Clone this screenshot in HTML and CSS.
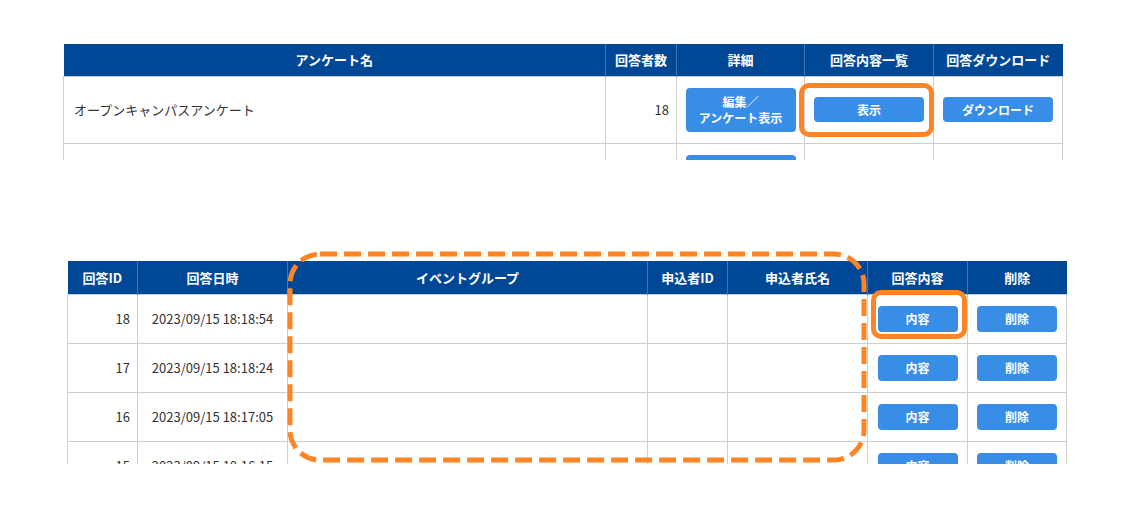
FILE: index.html
```html
<!DOCTYPE html>
<html lang="ja">
  <head>
    <meta charset="UTF-8" />
    <meta name="viewport" content="width=device-width, initial-scale=1.0" />
    <title>アンケート回答</title>
    <link rel="stylesheet" href="styles.css">
  </head>

  <body>
    <div class="page">

      <div class="shot shot-top">
        <table class="grid list">
          <colgroup>
            <col style="width:542px" />
            <col style="width:71px" />
            <col style="width:128px" />
            <col style="width:129px" />
            <col style="width:129px" />
          </colgroup>
          <tr>
            <th>アンケート名</th>
            <th>回答者数</th>
            <th>詳細</th>
            <th>回答内容一覧</th>
            <th>回答ダウンロード</th>
          </tr>
          <tr>
            <td class="name">オープンキャンパスアンケート</td>
            <td class="num">18</td>
            <td class="center"><button class="btn btn-wide btn-tall">編集／<br />アンケート表示</button></td>
            <td class="center"><button class="btn btn-wide mark mark-show">表示</button></td>
            <td class="center"><button class="btn btn-wide">ダウンロード</button></td>
          </tr>
          <tr>
            <td class="name">学校説明会アンケート</td>
            <td class="num">7</td>
            <td class="center"><button class="btn btn-wide btn-tall">編集／<br />アンケート表示</button></td>
            <td class="center"><button class="btn btn-wide">表示</button></td>
            <td class="center"><button class="btn btn-wide">ダウンロード</button></td>
          </tr>
        </table>
      </div>

      <div class="shot-wrap">
        <div class="shot shot-bottom">
          <table class="grid answers">
            <colgroup>
              <col style="width:70px" />
              <col style="width:150px" />
              <col style="width:360px" />
              <col style="width:80px" />
              <col style="width:140px" />
              <col style="width:100px" />
              <col style="width:99px" />
            </colgroup>
            <tr>
              <th>回答ID</th>
              <th>回答日時</th>
              <th>イベントグループ</th>
              <th>申込者ID</th>
              <th>申込者氏名</th>
              <th>回答内容</th>
              <th>削除</th>
            </tr>
            <tr>
              <td class="num">18</td>
              <td class="center">2023/09/15 18:18:54</td>
              <td></td><td></td><td></td>
              <td class="center"><button class="btn btn-small mark mark-detail">内容</button></td>
              <td class="center"><button class="btn btn-small">削除</button></td>
            </tr>
            <tr>
              <td class="num">17</td>
              <td class="center">2023/09/15 18:18:24</td>
              <td></td><td></td><td></td>
              <td class="center"><button class="btn btn-small">内容</button></td>
              <td class="center"><button class="btn btn-small">削除</button></td>
            </tr>
            <tr>
              <td class="num">16</td>
              <td class="center">2023/09/15 18:17:05</td>
              <td></td><td></td><td></td>
              <td class="center"><button class="btn btn-small">内容</button></td>
              <td class="center"><button class="btn btn-small">削除</button></td>
            </tr>
            <tr>
              <td class="num">15</td>
              <td class="center">2023/09/15 18:16:15</td>
              <td></td><td></td><td></td>
              <td class="center"><button class="btn btn-small">内容</button></td>
              <td class="center"><button class="btn btn-small">削除</button></td>
            </tr>
          </table>
        </div>

        <!-- annotation around the empty columns -->
        <svg class="dash-mark" width="584" height="216" viewBox="0 0 584 216">
          <rect x="5" y="4" width="574" height="206" rx="30" ry="30"
                fill="none" stroke="#fd8526" stroke-width="5" stroke-dasharray="17 7" />
        </svg>
      </div>

    </div>
  </body>
</html>
```

FILE: styles.css
```css
* { box-sizing : border-box; }
body { margin:0; background-color:#FFF; font-family:"Noto Sans CJK JP", "Noto Sans", sans-serif; color:#333; }
.page { padding-top:44px; }

.shot { overflow:hidden; }
.shot-top { margin-left:63px; width:1000px; height:116px; }
.shot-wrap { position:relative; margin-top:101px; margin-left:67px; width:1000px; }
.shot-bottom { height:203px; }

.grid { border-collapse:collapse; table-layout:fixed; width:999px; font-size:13px; }
.grid th { background:#004796; color:#fff; font-weight:bold; padding:0; text-align:center; border:1px solid #4a72ab; border-top:none; border-bottom:none; }
.grid th:first-child { border-left:none; }
.grid th:last-child { border-right:none; }
.grid td { border:1px solid #cfcfcf; padding:0 7px; }
.grid .name { padding-left:10px; }
.grid .num { text-align:right; }
.grid .center { text-align:center; padding:0; }

.list th { height:32px; }
.list td { height:67px; }
.answers th { height:33px; }
.answers td { height:49px; }

.btn { position:relative; border:none; border-radius:4px; background:#388de6; color:#fff; font-family:inherit; font-weight:bold; font-size:12px; line-height:16px; padding:0; cursor:pointer; vertical-align:middle; }
.btn-wide { width:110px; height:25px; }
.btn-tall { height:44px; }
.btn-small { width:80px; height:26px; }

.mark::after { content:""; position:absolute; border:5px solid #fd8526; border-radius:10px; }
.mark-show::after { left:-15px; right:-10px; top:-14px; bottom:-15px; }
.mark-detail::after { left:-7px; right:-9px; top:-16px; bottom:-7px; }

.dash-mark { position:absolute; left:218px; top:-11px; }
```
